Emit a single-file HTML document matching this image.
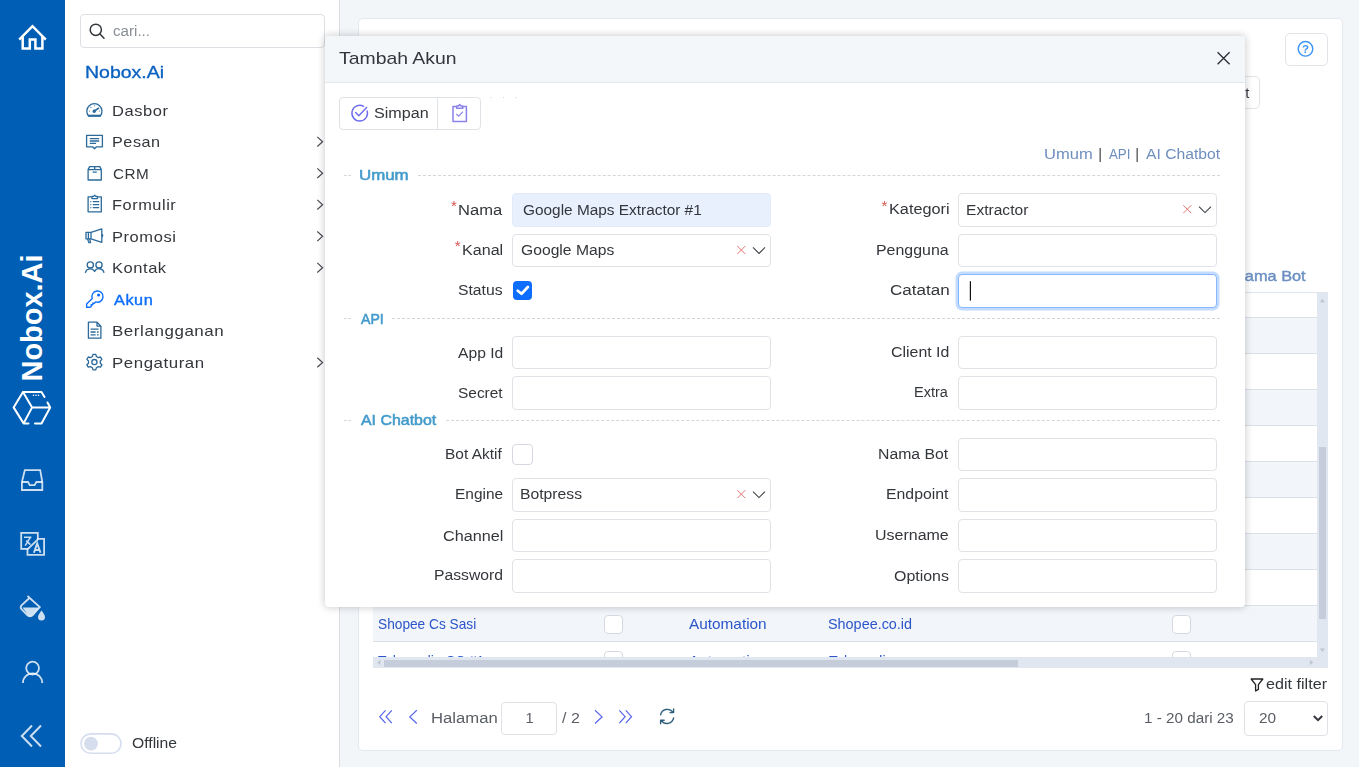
<!DOCTYPE html>
<html lang="id"><head><meta charset="utf-8"><title>Nobox.Ai - Akun</title>
<style>
*{box-sizing:border-box;margin:0;padding:0}
html,body{width:1359px;height:767px;overflow:hidden}
body{background:#f3f6f9;font-family:"Liberation Sans",sans-serif;color:#3b3f45;position:relative}
.abs{position:absolute}
.t{position:absolute;white-space:pre;display:block;transform-origin:0 50%}
#rail{left:0;top:0;width:65px;height:767px;background:#005eb4}
#menu{left:65px;top:0;width:275px;height:767px;background:#fff;border-right:1px solid #dadde2}
#search{left:80px;top:14px;width:245px;height:34px;border:1px solid #dcdfe4;border-radius:4px;background:#fff}
#brandv{left:32px;top:317.5px;width:0;height:0}
#brandv span{position:absolute;white-space:pre;transform:translate(-50%,-50%) rotate(-90deg);color:#fff;font-weight:700}
#card{left:358px;top:18px;width:985px;height:733px;background:#fff;border:1px solid #e4e9f0;border-radius:5px}
.btn{position:absolute;background:#fff;border:1px solid #e1e4e8;border-radius:5px}
#tbl{left:373px;top:293px;width:944px;height:364px;overflow:hidden;background:#fff}
#tbltop{left:373px;top:292px;width:955px;height:1px;background:#dfe5ee}
.row{position:absolute;left:0;width:945px;height:36px;border-bottom:1px solid #dce1e8;background:#fff}
.row.alt{background:#f2f5f9}
.cb{position:absolute;width:19px;height:19px;border:1px solid #d5d9df;border-radius:4px;background:#fff}
#vsb{left:1317px;top:293px;width:11px;height:365px;background:#e1e7f0}
#vsb i{position:absolute;left:2px;top:154px;width:7px;height:172px;background:#c5cddb}
#hsb{left:373px;top:657px;width:955px;height:10.6px;background:#e1e7f0}
#hsb i{position:absolute;left:11px;top:2.5px;width:634px;height:7px;background:#c5cddb}
.inp{position:absolute;height:33px;width:259px;border:1px solid #dfe2e6;border-radius:4px;background:#fff}
#modal{left:325px;top:36px;width:920px;height:571px;background:#fff;border-radius:4px;box-shadow:0 0 7px 1px rgba(20,20,30,.2);overflow:hidden}
#mhead{left:0;top:0;width:920px;height:47px;background:#f4f7fa;border-bottom:1px solid #e3e7ec}
.dash{position:absolute;height:0;border-top:1px dashed #d3d6da}
svg.ov{position:absolute;left:0;top:0;width:1359px;height:767px;overflow:visible}

.lyr{position:absolute;left:0;top:0;width:1359px;height:767px;will-change:transform;pointer-events:none}

</style></head>
<body>
<div id="rail" class="abs"></div>
<div id="menu" class="abs"></div>
<div id="search" class="abs"></div>
<div id="brandv" class="abs"><span style="font-size:29px;letter-spacing:-0.05px">Nobox.Ai</span></div>
<div id="card" class="abs"></div>
<div class="btn" style="left:1285px;top:33px;width:43px;height:33px"></div>
<div class="btn" style="left:1180px;top:76px;width:80px;height:33px"></div>
<div id="tbltop" class="abs"></div>
<div id="tbl" class="abs">
<div class="row" style="top:-11px"><div class="cb" style="left:231px;top:8.5px"></div><div class="cb" style="left:799px;top:8.5px"></div></div>
<div class="row alt" style="top:25px"><div class="cb" style="left:231px;top:8.5px"></div><div class="cb" style="left:799px;top:8.5px"></div></div>
<div class="row" style="top:61px"><div class="cb" style="left:231px;top:8.5px"></div><div class="cb" style="left:799px;top:8.5px"></div></div>
<div class="row alt" style="top:97px"><div class="cb" style="left:231px;top:8.5px"></div><div class="cb" style="left:799px;top:8.5px"></div></div>
<div class="row" style="top:133px"><div class="cb" style="left:231px;top:8.5px"></div><div class="cb" style="left:799px;top:8.5px"></div></div>
<div class="row alt" style="top:169px"><div class="cb" style="left:231px;top:8.5px"></div><div class="cb" style="left:799px;top:8.5px"></div></div>
<div class="row" style="top:205px"><div class="cb" style="left:231px;top:8.5px"></div><div class="cb" style="left:799px;top:8.5px"></div></div>
<div class="row alt" style="top:241px"><div class="cb" style="left:231px;top:8.5px"></div><div class="cb" style="left:799px;top:8.5px"></div></div>
<div class="row" style="top:277px"><div class="cb" style="left:231px;top:8.5px"></div><div class="cb" style="left:799px;top:8.5px"></div></div>
<div class="row alt" style="top:313px"><div class="cb" style="left:231px;top:8.5px"></div><div class="cb" style="left:799px;top:8.5px"></div></div>
<div class="row" style="top:349px"><div class="cb" style="left:231px;top:8.5px"></div><div class="cb" style="left:799px;top:8.5px"></div></div>
</div>
<div class="lyr" style="height:668px;overflow:hidden">
<span class="t" style="left:377.98px;top:614.0px;font-size:14.5px;line-height:20px;color:#2b55c9;transform:scaleX(0.9448);">Shopee Cs Sasi</span>
<span class="t" style="left:689.37px;top:614.0px;font-size:14.5px;line-height:20px;color:#2b55c9;transform:scaleX(1.0582);">Automation</span>
<span class="t" style="left:828.25px;top:614.0px;font-size:14.5px;line-height:20px;color:#2b55c9;transform:scaleX(0.9932);">Shopee.co.id</span>
<span class="t" style="left:378.29px;top:651.0px;font-size:14.5px;line-height:20px;color:#2b55c9;transform:scaleX(0.9634);">Tokopedia CS #1</span>
<span class="t" style="left:689.37px;top:651.0px;font-size:14.5px;line-height:20px;color:#2b55c9;transform:scaleX(1.0582);">Automation</span>
<span class="t" style="left:828.58px;top:651.0px;font-size:14.5px;line-height:20px;color:#2b55c9;transform:scaleX(0.9744);">Tokopedia</span>
</div>
<div id="vsb" class="abs"><i></i></div>
<div id="hsb" class="abs"><i></i></div>
<div class="inp" style="left:501px;top:702px;width:56px;height:33px"></div>
<div class="inp" style="left:1244px;top:701px;width:84px;height:35px"></div>
<div class="lyr">
<span class="t" style="left:112.86px;top:21.0px;font-size:14.7px;line-height:20px;color:#8a8f96;transform:scaleX(1.0308);">cari...</span>
<span class="t" style="left:84.7px;top:60.5px;font-size:17px;line-height:24px;color:#0b62c0;transform:scaleX(1.1468);-webkit-text-stroke:0.35px #0b62c0;">Nobox.Ai</span>
<span class="t" style="left:112.25px;top:100.5px;font-size:15px;line-height:20px;color:#33363b;transform:scaleX(1.0996);letter-spacing:0.5px;">Dasbor</span>
<span class="t" style="left:112.27px;top:131.5px;font-size:15px;line-height:20px;color:#33363b;transform:scaleX(1.0793);letter-spacing:0.5px;">Pesan</span>
<span class="t" style="left:112.82px;top:163.5px;font-size:15px;line-height:20px;color:#33363b;transform:scaleX(1.0187);letter-spacing:0.5px;">CRM</span>
<span class="t" style="left:112.26px;top:194.5px;font-size:15px;line-height:20px;color:#33363b;transform:scaleX(1.0908);letter-spacing:0.5px;">Formulir</span>
<span class="t" style="left:112.25px;top:226.5px;font-size:15px;line-height:20px;color:#33363b;transform:scaleX(1.1009);letter-spacing:0.5px;">Promosi</span>
<span class="t" style="left:112.25px;top:257.5px;font-size:15px;line-height:20px;color:#33363b;transform:scaleX(1.1001);letter-spacing:0.5px;">Kontak</span>
<span class="t" style="left:113.57px;top:289.5px;font-size:15px;line-height:20px;color:#0d6efd;transform:scaleX(1.0836);letter-spacing:0.5px;-webkit-text-stroke:0.4px #0d6efd;">Akun</span>
<span class="t" style="left:112.21px;top:320.5px;font-size:15px;line-height:20px;color:#33363b;transform:scaleX(1.1301);letter-spacing:0.5px;">Berlangganan</span>
<span class="t" style="left:112.22px;top:352.5px;font-size:15px;line-height:20px;color:#33363b;transform:scaleX(1.123);letter-spacing:0.5px;">Pengaturan</span>
<span class="t" style="left:132.16px;top:733.0px;font-size:14.7px;line-height:20px;color:#33363b;transform:scaleX(1.0676);">Offline</span>
<span class="t" style="left:1232.96px;top:266.0px;font-size:14.7px;line-height:20px;color:#6b8fc2;transform:scaleX(1.1125);-webkit-text-stroke:0.4px #6b8fc2;">Nama Bot</span>
<span class="t" style="left:431.03px;top:708.0px;font-size:14.7px;line-height:20px;color:#5a5e64;transform:scaleX(1.1356);">Halaman</span>
<span class="t" style="left:525.38px;top:708.0px;font-size:14.7px;line-height:20px;color:#5a5e64;transform:scaleX(1);">1</span>
<span class="t" style="left:561.9px;top:708.0px;font-size:14.7px;line-height:20px;color:#5a5e64;transform:scaleX(1.0894);">/ 2</span>
<span class="t" style="left:1144.34px;top:708.0px;font-size:14.7px;line-height:20px;color:#5a5e64;transform:scaleX(1.0378);">1 - 20 dari 23</span>
<span class="t" style="left:1258.73px;top:708.0px;font-size:14.7px;line-height:20px;color:#5a5e64;transform:scaleX(1.0446);">20</span>
<span class="t" style="left:1266.11px;top:674.0px;font-size:14.7px;line-height:20px;color:#33363b;transform:scaleX(1.0998);">edit filter</span>
<span class="t" style="left:1245.28px;top:83.0px;font-size:14.7px;line-height:20px;color:#33363b;transform:scaleX(1);">t</span>
</div>
<svg class="ov" viewBox="0 0 1359 767">
<!-- rail icons -->
<g fill="none" stroke="#fff" stroke-width="2.5" stroke-linejoin="miter">
<path d="M19.2,39.6 L32.5,26.2 L45.8,39.6"/>
<path d="M22.7,36.5 V48.4 H29.8 V39.4 H35.4 V48.4 H42.4 V36.5"/>
</g>
<g fill="none" stroke="#fff" stroke-width="2" stroke-linecap="round" stroke-linejoin="round">
<path d="M23,392 L13.6,407.4 L23.6,423.4 H28.5 M35,423.4 H41.5 L50.2,407.4 L47.5,402.5 M44.5,397 L41.5,392 H23 L32.1,407.4 H50 M32.1,407.4 L23.6,423.4"/>
</g>
<g fill="#fff"><circle cx="33.5" cy="395.3" r="0.8"/><circle cx="36" cy="395.3" r="0.8"/><circle cx="38.5" cy="395.3" r="0.8"/></g>
<g fill="none" stroke="#fff" stroke-opacity=".8" stroke-width="1.8" stroke-linejoin="miter">
<path d="M24.8,470.2 H40.2 L42.3,482 V490 H21.9 V482 Z"/>
<path d="M21.9,482 H28 L29.8,485.2 H34.6 L36.4,482 H42.3"/>
<rect x="21.2" y="532.9" width="16.6" height="16"/>
<path d="M38.4,538.8 H44.1 V554.8 H27.5 V549.4 Z" fill="#005eb4"/>
<path d="M24,537.3 H31.4 M30.2,537.6 L25.2,545.6 M26.2,540.6 L30.4,544.6" stroke-width="1.5"/>
<path d="M33.9,552.8 L37.2,543.4 L40.5,552.8 M35.2,550 H39.2" stroke-width="1.9"/>
<path d="M27.5,596 L39.8,607 L32.5,615.3 Q30,617.3 27.5,615.3 L21.3,609 Q20,607 21.5,605.3 L30,597.5"/>
<circle cx="32.6" cy="668.1" r="6.4"/>
<path d="M22.9,683 A9.7,9.7 0 0 1 42.3,683"/>
<path d="M32,725.5 L21.8,736 L32,746.5 M41,725.5 L30.8,736 L41,746.5" stroke-width="2"/>
</g>
<path d="M22.5,607.5 H39 L32.3,614.8 Q30,616.6 27.7,614.8 Z" fill="#fff" fill-opacity=".8"/>
<path d="M41.5,610.5 Q45,615 45,617 A3.5,3.5 0 0 1 38,617 Q38,615 41.5,610.5 Z" fill="#fff" fill-opacity=".8"/>
<!-- search -->
<g fill="none" stroke="#33363b" stroke-width="1.5" stroke-linecap="round"><circle cx="95.8" cy="29.8" r="5.6"/><path d="M100,34 L104,38.2"/></g>
<!-- menu chevrons -->
<g fill="none" stroke="#4a4e55" stroke-width="1.2">
<path d="M317.3,136.9 L322.6,141.7 L317.3,146.5"/>
<path d="M317.3,168.4 L322.6,173.2 L317.3,178"/>
<path d="M317.3,199.9 L322.6,204.7 L317.3,209.5"/>
<path d="M317.3,231.5 L322.6,236.3 L317.3,241.1"/>
<path d="M317.3,262.9 L322.6,267.7 L317.3,272.5"/>
<path d="M317.3,357.7 L322.6,362.5 L317.3,367.3"/>
</g>
<!-- menu icons -->
<g fill="none" stroke="#2b6a9b" stroke-width="1.3" stroke-linejoin="round">
<!-- dasbor -->
<path d="M88.5,116 A7.6,7.6 0 1 1 100.3,116 Z"/>
<path d="M94.4,111 L99,107.8" stroke-width="1.6"/>
<circle cx="94.2" cy="111.2" r="1.1" fill="#2b6a9b"/>
<g fill="#2b6a9b" stroke="none"><circle cx="89.6" cy="111" r=".55"/><circle cx="90.9" cy="107.4" r=".55"/><circle cx="94.4" cy="105.8" r=".55"/><circle cx="99.4" cy="111" r=".55"/></g><path d="M88.2,115.6 H100.6" stroke-width="1.8"/>
<!-- pesan -->
<path d="M86.6,135.4 H102.4 V146.8 H96.4 L94.5,148.8 L92.6,146.8 H86.6 Z"/>
<path d="M89.8,138.6 H99.2 M89.8,141 H99.2 M89.8,143.4 H96"/>
<!-- crm -->
<path d="M88.1,169.6 L89.6,166.6 H99.8 L101.3,169.6 V180 H88.1 Z M88.1,169.6 H101.3 M94.7,166.6 V169.6 M92.6,172.2 H96.8"/>
<!-- formulir -->
<path d="M92,196.8 H88.1 V211.8 H101.3 V196.8 H97.4 M92,198.6 V196.4 H93.6 L94.7,195.2 L95.8,196.4 H97.4 V198.6 Z"/>
<path d="M90.3,201.6 H91.3 M92.8,201.6 H99.2 M90.3,204.6 H91.3 M92.8,204.6 H99.2 M90.3,207.6 H91.3 M92.8,207.6 H99.2"/>
<!-- promosi -->
<path d="M86,232.3 H91 L101.8,228.9 V242.3 L91,238.9 H86 Z M88.4,232.3 V238.9 M91,232.3 V238.9 M87.6,238.9 L88.8,242.6 H90.6 L89.6,238.9"/>
<path d="M101.8,234.4 Q103.6,235.6 101.8,236.8" />
<!-- kontak -->
<circle cx="90.3" cy="264.9" r="3.1"/><circle cx="99" cy="264.9" r="3.1"/>
<path d="M85.3,272.8 A5,5 0 0 1 94.6,271.5 A5,5 0 0 1 104,272.8"/>
<!-- berlangganan -->
<path d="M88.4,322.2 H97 L100.9,326.1 V338.2 H88.4 Z M97,322.2 V326.1 H100.9"/>
<path d="M90.6,329.2 H98.6 M90.6,332 H95.6 M97,332 H98.6 M90.6,334.8 H95.6 M97,334.8 H98.6"/>
<!-- pengaturan -->
<circle cx="94.4" cy="362.1" r="2.6"/>
<path d="M93,354.3 H95.8 L96.4,356.5 L98.3,357.6 L100.5,357 L101.9,359.4 L100.3,361 V363.2 L101.9,364.8 L100.5,367.2 L98.3,366.6 L96.4,367.7 L95.8,369.9 H93 L92.4,367.7 L90.5,366.6 L88.3,367.2 L86.9,364.8 L88.5,363.2 V361 L86.9,359.4 L88.3,357 L90.5,357.6 L92.4,356.5 Z"/>
</g>
<!-- akun key -->
<g fill="none" stroke="#0d6efd" stroke-width="1.4" stroke-linejoin="round">
<path d="M92.2,298.6 A5.6,5.6 0 1 1 95.6,301.9 L94.4,303.2 H92.8 V304.8 H91.2 V306.4 L90.2,307.2 H86.6 V303.9 Z"/>
<circle cx="98.6" cy="295" r="0.9" fill="#0d6efd"/>
</g>
<!-- offline toggle -->
<rect x="81" y="733.9" width="40" height="19.4" rx="9.7" fill="#fff" stroke="#d5ddef" stroke-width="1.6"/>
<circle cx="91" cy="743.6" r="6.9" fill="#d6ddec"/>
<!-- help -->
<circle cx="1305.5" cy="48.8" r="7.3" fill="none" stroke="#3d94f6" stroke-width="1.4"/>
<text x="1305.5" y="53" text-anchor="middle" font-family="Liberation Sans, sans-serif" font-size="11.5" font-weight="700" fill="#3d94f6">?</text>
<!-- scrollbar arrows -->
<g fill="#c0c7d4">
<path d="M1319.7,302.3 L1322.4,298.8 L1325.1,302.3 Z"/>
<path d="M1319.7,648.6 L1322.4,652.1 L1325.1,648.6 Z"/>
<path d="M380.5,659.7 L377,662.4 L380.5,665.1 Z"/>
<path d="M1309.8,659.7 L1313.3,662.4 L1309.8,665.1 Z"/>
</g>
<!-- pagination -->
<g fill="none" stroke="#5867e8" stroke-width="1.25">
<path d="M385.5,710.3 L379.8,716.7 L385.5,723.1 M391.8,710.3 L386.1,716.7 L391.8,723.1"/>
<path d="M416.8,710.3 L409.8,716.9 L416.8,723.5"/>
<path d="M595,710.3 L602,716.9 L595,723.5"/>
<path d="M619.4,710.3 L625.1,716.7 L619.4,723.1 M625.8,710.3 L631.5,716.7 L625.8,723.1"/>
</g>
<g fill="none" stroke="#2d5d7b" stroke-width="1.35" stroke-linecap="round" stroke-linejoin="round">
<path d="M660.6,714.8 A6.8,6.8 0 0 1 672.8,712.2 M673.6,709 V712.6 H670"/>
<path d="M673.6,718 A6.8,6.8 0 0 1 661.4,720.6 M660.6,723.8 V720.2 H664.2"/>
</g>
<!-- filter -->
<path d="M1251.2,679 H1262.8 L1258.4,684.6 V689.4 L1255.6,691 V684.6 Z" fill="none" stroke="#222" stroke-width="1.3" stroke-linejoin="round"/>
<!-- select chevron -->
<path d="M1313.8,716 L1318,720.2 L1322.2,716" fill="none" stroke="#33363b" stroke-width="2"/>

</svg>
<div id="modal" class="abs">
<div id="mhead" class="abs"></div>
</div>
<div class="abs" style="left:339px;top:97px;width:142px;height:33px;border:1px solid #dfe2e6;border-radius:4px;background:#fff"></div>
<div class="abs" style="left:437px;top:98px;width:1px;height:31px;background:#dfe2e6"></div>
<div class="dash" style="left:344px;top:175px;width:7px"></div>
<div class="dash" style="left:418px;top:175px;width:802px"></div>
<div class="dash" style="left:344px;top:318px;width:7px"></div>
<div class="dash" style="left:392px;top:318px;width:828px"></div>
<div class="dash" style="left:344px;top:420px;width:7px"></div>
<div class="dash" style="left:446px;top:420px;width:774px"></div>
<div class="inp" style="left:512px;top:193px;height:34px;background:#e8f0fe;border-color:#e3ebfb"></div>
<div class="inp" style="left:512px;top:234px;height:33px;"></div>
<div class="abs" style="left:513px;top:281px;width:19px;height:19px;border-radius:4px;background:#0d6efd"></div>
<div class="inp" style="left:512px;top:336px;height:33px;"></div>
<div class="inp" style="left:512px;top:376px;height:34px;"></div>
<div class="cb" style="left:512px;top:444px;width:21px;height:21px"></div>
<div class="inp" style="left:512px;top:478px;height:34px;"></div>
<div class="inp" style="left:512px;top:519px;height:33px;"></div>
<div class="inp" style="left:512px;top:559px;height:34px;"></div>
<div class="inp" style="left:958px;top:193px;height:34px;"></div>
<div class="inp" style="left:958px;top:234px;height:33px;"></div>
<div class="inp" style="left:958px;top:274px;height:34px;border-color:#86b7fe;box-shadow:0 0 0 2.5px rgba(13,110,253,.25)"></div>
<div class="inp" style="left:958px;top:336px;height:33px;"></div>
<div class="inp" style="left:958px;top:376px;height:34px;"></div>
<div class="inp" style="left:958px;top:438px;height:33px;"></div>
<div class="inp" style="left:958px;top:478px;height:34px;"></div>
<div class="inp" style="left:958px;top:519px;height:33px;"></div>
<div class="inp" style="left:958px;top:559px;height:34px;"></div>
<div class="lyr">
<span class="t" style="left:338.66px;top:46.5px;font-size:17px;line-height:24px;color:#33363b;transform:scaleX(1.1406);">Tambah Akun</span>
<span class="t" style="left:373.97px;top:103.0px;font-size:14.7px;line-height:20px;color:#33363b;transform:scaleX(1.0977);">Simpan</span>
<span class="t" style="left:1044.12px;top:144.0px;font-size:14.7px;line-height:20px;color:#6e8fbe;transform:scaleX(1.1252);">Umum</span>
<span class="t" style="left:1098.19px;top:144.0px;font-size:14.7px;line-height:20px;color:#444;transform:scaleX(1);">|</span>
<span class="t" style="left:1108.77px;top:144.0px;font-size:14.7px;line-height:20px;color:#6e8fbe;transform:scaleX(0.9057);">API</span>
<span class="t" style="left:1135.29px;top:144.0px;font-size:14.7px;line-height:20px;color:#444;transform:scaleX(1);">|</span>
<span class="t" style="left:1145.87px;top:144.0px;font-size:14.7px;line-height:20px;color:#6e8fbe;transform:scaleX(1.0683);">AI Chatbot</span>
<span class="t" style="left:359.4px;top:165.0px;font-size:14.7px;line-height:20px;color:#449bcb;transform:scaleX(1.1471);-webkit-text-stroke:0.55px #449bcb;">Umum</span>
<span class="t" style="left:360.97px;top:309.0px;font-size:14.7px;line-height:20px;color:#449bcb;transform:scaleX(0.9595);-webkit-text-stroke:0.55px #449bcb;">API</span>
<span class="t" style="left:360.97px;top:410.0px;font-size:14.7px;line-height:20px;color:#449bcb;transform:scaleX(1.0842);-webkit-text-stroke:0.55px #449bcb;">AI Chatbot</span>
<span class="t" style="left:457.84px;top:200.0px;font-size:14.7px;line-height:20px;color:#33363b;transform:scaleX(1.1269);">Nama</span>
<span class="t" style="left:461.88px;top:240.0px;font-size:14.7px;line-height:20px;color:#33363b;transform:scaleX(1.0964);">Kanal</span>
<span class="t" style="left:457.99px;top:280.0px;font-size:14.7px;line-height:20px;color:#33363b;transform:scaleX(1.0707);">Status</span>
<span class="t" style="left:457.77px;top:343.0px;font-size:14.7px;line-height:20px;color:#33363b;transform:scaleX(1.0653);">App Id</span>
<span class="t" style="left:457.5px;top:383.0px;font-size:14.7px;line-height:20px;color:#33363b;transform:scaleX(1.0509);">Secret</span>
<span class="t" style="left:445.23px;top:444.0px;font-size:14.7px;line-height:20px;color:#33363b;transform:scaleX(1.053);">Bot Aktif</span>
<span class="t" style="left:454.63px;top:484.0px;font-size:14.7px;line-height:20px;color:#33363b;transform:scaleX(1.0507);">Engine</span>
<span class="t" style="left:442.78px;top:526.0px;font-size:14.7px;line-height:20px;color:#33363b;transform:scaleX(1.1021);">Channel</span>
<span class="t" style="left:433.91px;top:565.0px;font-size:14.7px;line-height:20px;color:#33363b;transform:scaleX(1.0714);">Password</span>
<span class="t" style="left:888.66px;top:199.0px;font-size:14.7px;line-height:20px;color:#33363b;transform:scaleX(1.1081);">Kategori</span>
<span class="t" style="left:875.59px;top:240.0px;font-size:14.7px;line-height:20px;color:#33363b;transform:scaleX(1.0839);">Pengguna</span>
<span class="t" style="left:889.63px;top:280.0px;font-size:14.7px;line-height:20px;color:#33363b;transform:scaleX(1.1598);">Catatan</span>
<span class="t" style="left:890.89px;top:342.0px;font-size:14.7px;line-height:20px;color:#33363b;transform:scaleX(1.0824);">Client Id</span>
<span class="t" style="left:914.31px;top:382.0px;font-size:14.7px;line-height:20px;color:#33363b;transform:scaleX(0.9887);">Extra</span>
<span class="t" style="left:878.1px;top:444.0px;font-size:14.7px;line-height:20px;color:#33363b;transform:scaleX(1.075);">Nama Bot</span>
<span class="t" style="left:885.9px;top:484.0px;font-size:14.7px;line-height:20px;color:#33363b;transform:scaleX(1.0764);">Endpoint</span>
<span class="t" style="left:875.17px;top:525.0px;font-size:14.7px;line-height:20px;color:#33363b;transform:scaleX(1.0882);">Username</span>
<span class="t" style="left:893.84px;top:566.0px;font-size:14.7px;line-height:20px;color:#33363b;transform:scaleX(1.0851);">Options</span>
<span class="t" style="left:450.96px;top:195.5px;font-size:15px;line-height:20px;color:#d9534f;transform:scaleX(1);">*</span>
<span class="t" style="left:454.86px;top:235.5px;font-size:15px;line-height:20px;color:#d9534f;transform:scaleX(1);">*</span>
<span class="t" style="left:881.46px;top:195.5px;font-size:15px;line-height:20px;color:#d9534f;transform:scaleX(1);">*</span>
<span class="t" style="left:523.33px;top:200.0px;font-size:14.7px;line-height:20px;color:#33363b;transform:scaleX(1.0475);">Google Maps Extractor #1</span>
<span class="t" style="left:520.71px;top:240.0px;font-size:14.7px;line-height:20px;color:#33363b;transform:scaleX(1.0675);">Google Maps</span>
<span class="t" style="left:966.22px;top:200.0px;font-size:14.7px;line-height:20px;color:#33363b;transform:scaleX(1.0608);">Extractor</span>
<span class="t" style="left:520.01px;top:484.0px;font-size:14.7px;line-height:20px;color:#33363b;transform:scaleX(1.0706);">Botpress</span>
</div>
<svg class="ov" viewBox="0 0 1359 767">

<path d="M1217.6,52.2 L1229.6,64.2 M1229.6,52.2 L1217.6,64.2" stroke="#2a2e35" stroke-width="1.3" fill="none"/>
<g fill="none" stroke="#6f6cf0" stroke-width="1.4" stroke-linecap="round" stroke-linejoin="round">
<path d="M367.2,111 A7.8,7.8 0 1 1 363.6,106.4"/>
<path d="M355.6,112.6 L358.8,115.8 L366.6,107.4"/>
</g>
<g fill="none" stroke="#8a82ea" stroke-width="1.5" stroke-linejoin="round">
<path d="M456.6,106.4 H453 V121.4 H466.4 V106.4 H462.8 M456.6,108.2 V106 H458.4 L459.7,104.6 L461,106 H462.8 V108.2 Z"/>
<path d="M456.4,114 L458.6,116.2 L463,111.6" stroke-width="1.2"/>
</g>
<g fill="none" stroke="#dc6f6b" stroke-width="0.95">
<path d="M737.3,246 L745.3,254 M745.3,246 L737.3,254"/>
<path d="M1183.3,205.2 L1191.3,213.2 M1191.3,205.2 L1183.3,213.2"/>
<path d="M737.3,490.2 L745.3,498.2 M745.3,490.2 L737.3,498.2"/>
</g>
<g fill="none" stroke="#3a3e44" stroke-width="1.05">
<path d="M753,247.4 L759,253.4 L765,247.4"/>
<path d="M1199,206.6 L1205,212.6 L1211,206.6"/>
<path d="M753,491.6 L759,497.6 L765,491.6"/>
</g>
<path d="M517.7,290.7 L521.5,293.8 L527.9,287" fill="none" stroke="#fff" stroke-width="2.7" stroke-linecap="round" stroke-linejoin="round"/>
<rect x="969.8" y="281.2" width="1.2" height="19.4" fill="#111"/>
<g fill="#d9dce0"><rect x="490.5" y="97" width="1.2" height="1.2"/><rect x="503" y="97" width="1.2" height="1.2"/><rect x="515.5" y="97" width="1.2" height="1.2"/></g>

</svg>

</body></html>
